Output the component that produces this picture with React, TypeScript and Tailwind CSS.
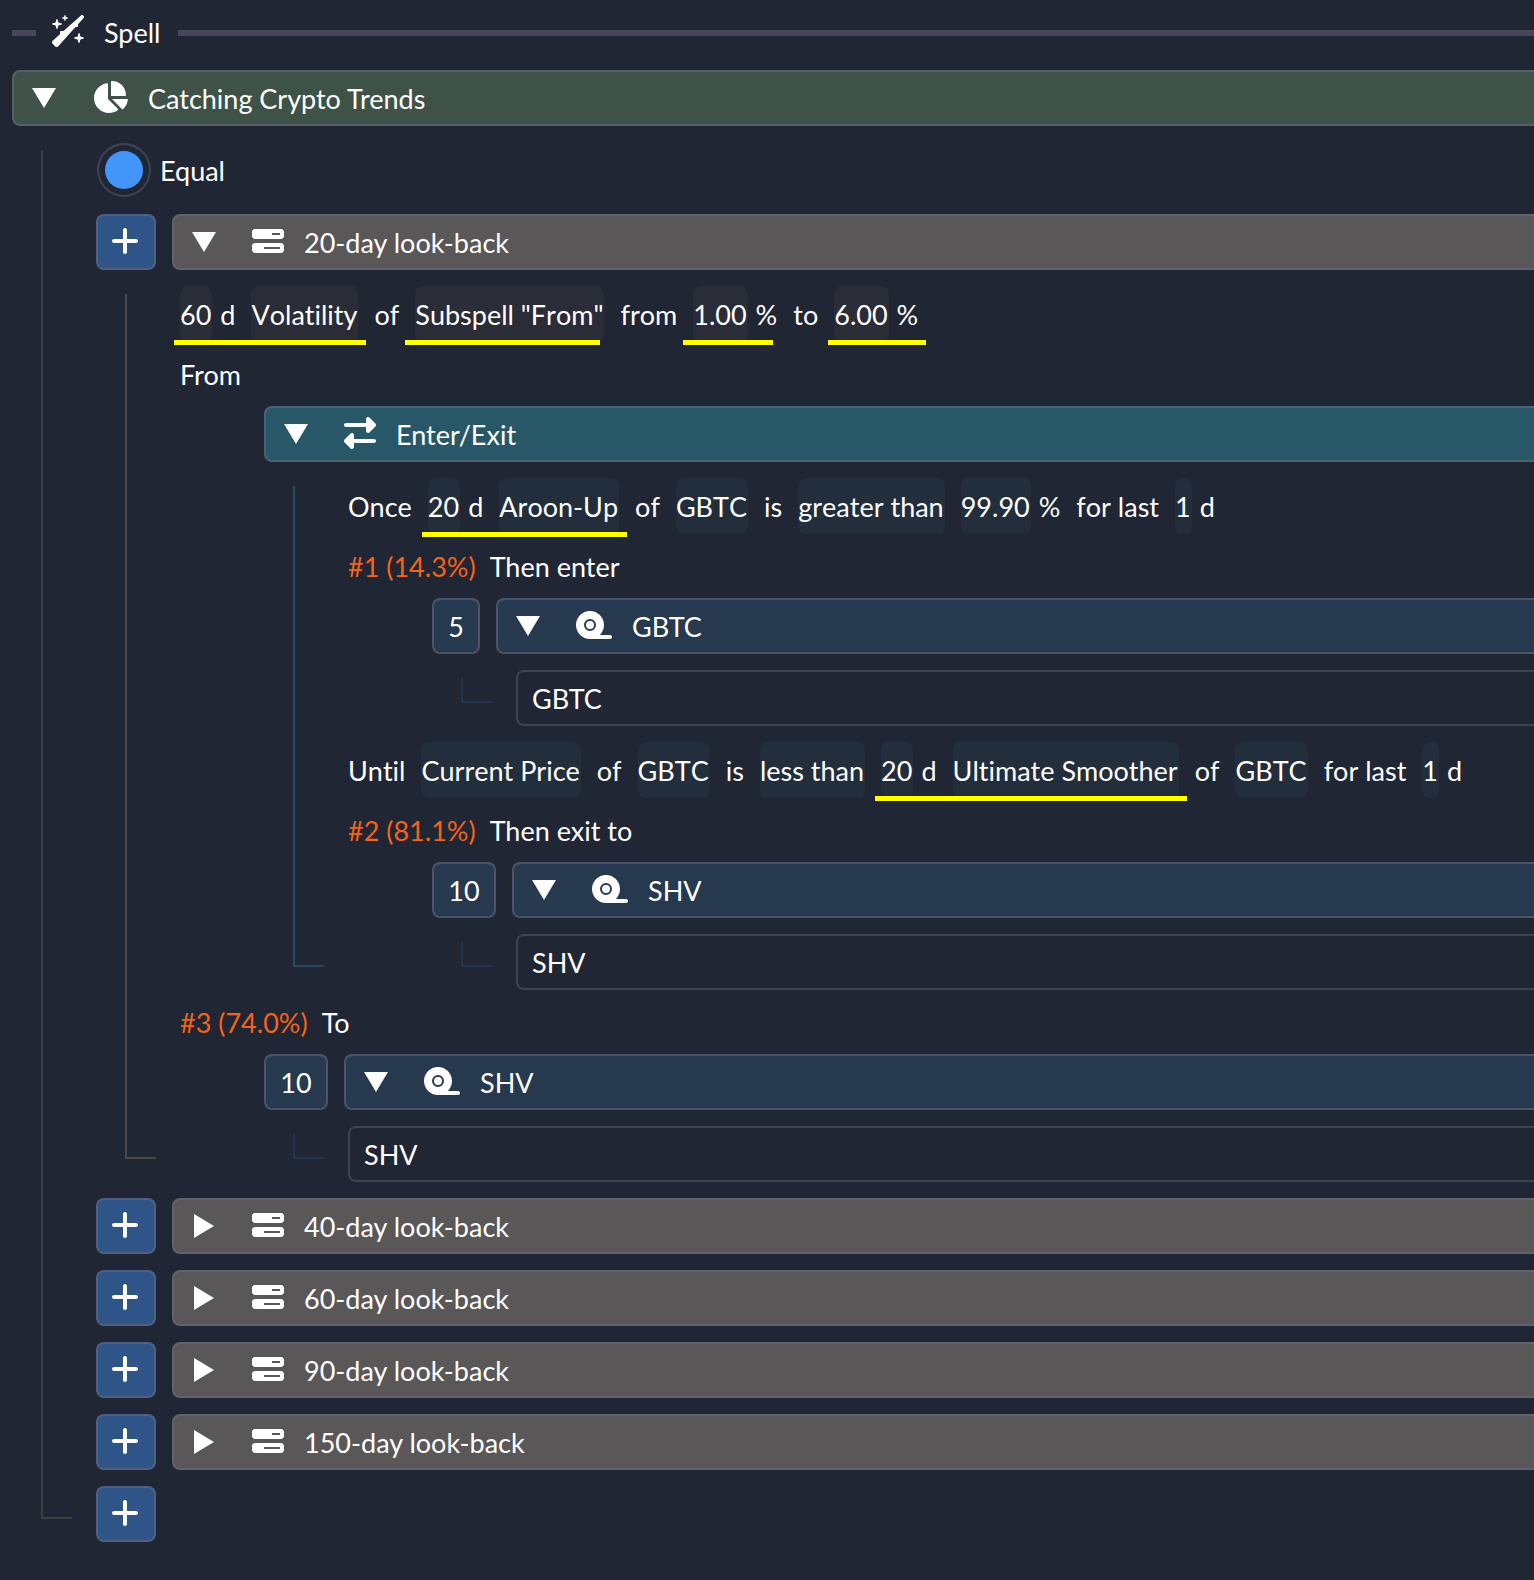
import type { ReactNode } from "react";
import clsx from "clsx";
import {
  FaBarsProgress,
  FaChartPie,
  FaPlus,
  FaRightLeft,
  FaTape,
  FaWandSparkles,
} from "react-icons/fa6";

type Tone = "green" | "gray" | "teal" | "blue";

const barTone: Record<Tone, string> = {
  green: "bg-[#3e5248]",
  gray: "bg-[#595757]",
  teal: "bg-[#285767]",
  blue: "bg-[#27394e]",
};

const lineTone: Record<Tone, string> = {
  green: "border-[#36443f]",
  gray: "border-[#4a484c]",
  teal: "border-[#27495a]",
  blue: "border-[#25344a]",
};

const chipTone: Record<"gray" | "teal", string> = {
  gray: "bg-[#2a2c38]",
  teal: "bg-[#232e3d]",
};

function Triangle({ open }: { open: boolean }) {
  return (
    <svg viewBox="0 0 24 24" className="h-6 w-6 shrink-0 fill-white" aria-hidden="true">
      {open ? <path d="M0 2H24L12 22Z" /> : <path d="M2 0L22 12L2 24Z" />}
    </svg>
  );
}

function Bar({
  tone,
  icon,
  label,
  open = false,
}: {
  tone: Tone;
  icon: ReactNode;
  label: string;
  open?: boolean;
}) {
  return (
    <button
      type="button"
      aria-expanded={open}
      className={clsx(
        "flex h-14 min-w-0 flex-1 items-center rounded-l-lg border-2 border-r-0 border-[#6e6e80]/50 pl-[18px] text-left",
        barTone[tone],
      )}
    >
      <Triangle open={open} />
      <span className="ml-9 shrink-0 pb-0.5">{icon}</span>
      <span className="ml-5 pt-0.5 whitespace-nowrap">{label}</span>
    </button>
  );
}

function AddButton() {
  return (
    <button
      type="button"
      aria-label="Add"
      className="flex h-14 w-[60px] shrink-0 items-center justify-center rounded-lg border-2 border-[#6e6e80]/50 bg-[#2f5487] pr-0.5 pb-0.5"
    >
      <FaPlus className="h-8 w-7" />
    </button>
  );
}

// Nested rows with the guide line on their left
function Branch({ tone, children }: { tone: Tone; children: ReactNode }) {
  return (
    <div className="flex">
      <div className={clsx("mt-2 mr-6 mb-[23px] ml-[29px] w-[31px] shrink-0 border-b-2 border-l-2", lineTone[tone])} />
      <div className="flex min-w-0 flex-1 flex-col gap-4">{children}</div>
    </div>
  );
}

function Sentence({ children }: { children: ReactNode }) {
  return <div className="flex h-14 items-center gap-4 whitespace-nowrap [font-kerning:none]">{children}</div>;
}

function Word({ children }: { children: ReactNode }) {
  return <span className="pt-0.5">{children}</span>;
}

function Chip({ tone, unit, children }: { tone: "gray" | "teal"; unit?: string; children: ReactNode }) {
  return (
    <span className="flex items-center gap-2">
      <button type="button" className={clsx("h-14 rounded-lg pt-0.5 pr-px", chipTone[tone])}>
        {children}
      </button>
      {unit && <Word>{unit}</Word>}
    </span>
  );
}

function Highlight({ shifted = false, children }: { shifted?: boolean; children: ReactNode }) {
  return (
    <span className="relative flex items-center gap-4">
      {children}
      <span
        className={clsx(
          "absolute -bottom-[3px] h-[5px] bg-[#ffff00]",
          shifted ? "right-1 -left-2.5" : "-right-2 -left-1.5",
        )}
      />
    </span>
  );
}

function StepLabel({ share, children }: { share?: string; children: ReactNode }) {
  return (
    <div className="flex h-8 items-center gap-3.5 whitespace-nowrap">
      {share && <span className="pt-0.5 text-[#f26419]">{share}</span>}
      <Word>{children}</Word>
    </div>
  );
}

function Asset({ weight, ticker }: { weight: number; ticker: string }) {
  return (
    <div className="ml-[84px] flex flex-col gap-4">
      <div className="flex gap-4">
        <button
          type="button"
          className={clsx(
            "h-14 shrink-0 rounded-lg border-2 border-[#6e6e80]/50 bg-[#27394e] pt-0.5 text-center",
            weight < 10 ? "w-12" : "w-16",
          )}
        >
          {weight}
        </button>
        <Bar tone="blue" open icon={<FaTape className="h-8 w-9" />} label={ticker} />
      </div>
      <Branch tone="blue">
        <input
          type="text"
          aria-label="Ticker"
          defaultValue={ticker}
          className="h-14 w-full rounded-l-lg border-2 border-r-0 border-[#6e6e80]/40 bg-transparent px-3.5 outline-none"
        />
      </Branch>
    </div>
  );
}

function LookBack({ days, open = false }: { days: number; open?: boolean }) {
  return (
    <div className="flex gap-4">
      <AddButton />
      <Bar tone="gray" open={open} icon={<FaBarsProgress className="h-8 w-8" />} label={`${days}-day look-back`} />
    </div>
  );
}

export default function App() {
  return (
    <main className="min-h-screen overflow-hidden bg-[#212635] pt-[17px] pb-9 pl-3 font-['Lato',sans-serif] text-[27px] leading-8 text-white [font-variant-ligatures:none]">
      <header className="mb-[21px] flex h-8 items-center">
        <span className="h-1.5 w-6 bg-[#47465a]" />
        <FaWandSparkles className="mb-1 ml-4 h-8 w-8" />
        <h1 className="mr-[18px] ml-5">Spell</h1>
        <span className="h-1.5 flex-1 bg-[#47465a]" />
      </header>

      <div className="flex flex-col gap-4">
        <div className="flex">
          <Bar tone="green" open icon={<FaChartPie className="h-8 w-9" />} label="Catching Crypto Trends" />
        </div>

        <Branch tone="green">
          <label className="flex h-14 items-center gap-2">
            <input
              type="radio"
              name="weighting"
              defaultChecked
              className="mx-px h-[54px] w-[54px] appearance-none rounded-full border-2 border-[#6e6e80]/40 bg-clip-content p-1.5 checked:bg-[#4296fa]"
            />
            <Word>Equal</Word>
          </label>

          <LookBack days={20} open />
          <Branch tone="gray">
            <Sentence>
              <Highlight>
                <Chip tone="gray" unit="d">60</Chip>
                <Chip tone="gray">Volatility</Chip>
              </Highlight>
              <Word>of</Word>
              <Highlight shifted>
                <Chip tone="gray">Subspell "From"</Chip>
              </Highlight>
              <Word>from</Word>
              <Highlight shifted>
                <Chip tone="gray" unit="%">1.00</Chip>
              </Highlight>
              <Word>to</Word>
              <Highlight>
                <Chip tone="gray" unit="%">6.00</Chip>
              </Highlight>
            </Sentence>
            <StepLabel>From</StepLabel>

            <div className="ml-[84px] flex flex-col gap-4">
              <div className="flex">
                <Bar tone="teal" open icon={<FaRightLeft className="h-8 w-8" />} label="Enter/Exit" />
              </div>
              <Branch tone="teal">
                <Sentence>
                  <Word>Once</Word>
                  <Highlight>
                    <Chip tone="teal" unit="d">20</Chip>
                    <Chip tone="teal">Aroon-Up</Chip>
                  </Highlight>
                  <Word>of</Word>
                  <Chip tone="teal">GBTC</Chip>
                  <Word>is</Word>
                  <Chip tone="teal">greater than</Chip>
                  <Chip tone="teal" unit="%">99.90</Chip>
                  <Word>for last</Word>
                  <Chip tone="teal" unit="d">1</Chip>
                </Sentence>
                <StepLabel share="#1 (14.3%)">Then enter</StepLabel>
                <Asset weight={5} ticker="GBTC" />

                <Sentence>
                  <Word>Until</Word>
                  <Chip tone="teal">Current Price</Chip>
                  <Word>of</Word>
                  <Chip tone="teal">GBTC</Chip>
                  <Word>is</Word>
                  <Chip tone="teal">less than</Chip>
                  <Highlight>
                    <Chip tone="teal" unit="d">20</Chip>
                    <Chip tone="teal">Ultimate Smoother</Chip>
                  </Highlight>
                  <Word>of</Word>
                  <Chip tone="teal">GBTC</Chip>
                  <Word>for last</Word>
                  <Chip tone="teal" unit="d">1</Chip>
                </Sentence>
                <StepLabel share="#2 (81.1%)">Then exit to</StepLabel>
                <Asset weight={10} ticker="SHV" />
              </Branch>
            </div>

            <StepLabel share="#3 (74.0%)">To</StepLabel>
            <Asset weight={10} ticker="SHV" />
          </Branch>

          <LookBack days={40} />
          <LookBack days={60} />
          <LookBack days={90} />
          <LookBack days={150} />
          <AddButton />
        </Branch>
      </div>
    </main>
  );
}
